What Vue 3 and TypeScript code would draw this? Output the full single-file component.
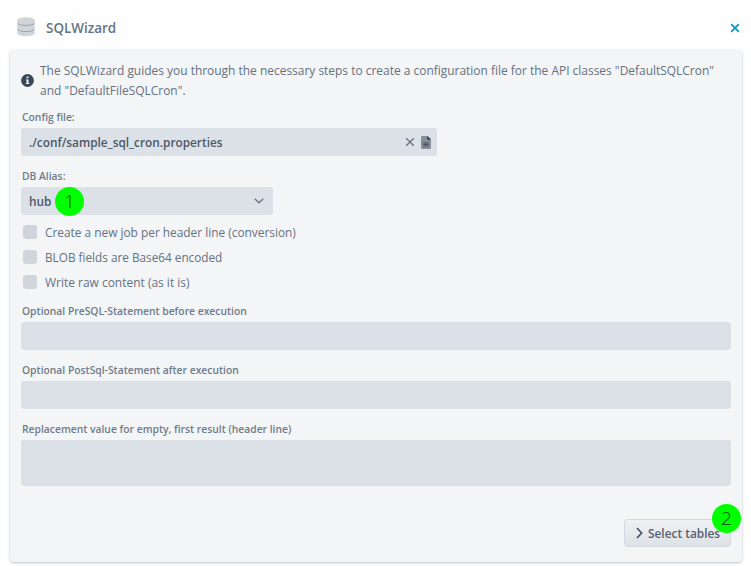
<script setup lang="ts">
import { ref } from 'vue'

interface Option {
  label: string
  cls: string
  checked: boolean
}

const configFile = ref('./conf/sample_sql_cron.properties')
const alias = ref('hub')
const options = ref<Option[]>([
  { label: 'Create a new job per header line (conversion)', cls: 'opt-job', checked: false },
  { label: 'BLOB fields are Base64 encoded', cls: 'opt-blob', checked: false },
  { label: 'Write raw content (as it is)', cls: 'opt-raw', checked: false },
])
const statements = [
  { label: 'Optional PreSQL-Statement before execution', cls: 'pre' },
  { label: 'Optional PostSql-Statement after execution', cls: 'post' },
  { label: 'Replacement value for empty, first result (header line)', cls: 'replacement' },
]
</script>

<template>
  <div class="dialog">
    <header class="header">
      <svg class="db-icon" width="18" height="20" viewBox="0 0 18 20">
        <path d="M.3 3.5C.3-.7 17.7-.7 17.7 3.5V16C17.7 20.2.3 20.2.3 16Z" fill="#d0d5da" />
        <path d="M.5 6C2 9.2 16 9.2 17.5 6M.5 12.2C2 15.4 16 15.4 17.5 12.2" fill="none" stroke="#98a3ae" stroke-width="1" />
      </svg>
      <h1 class="title"><span class="narrow">SQLWizard</span></h1>
      <svg class="close" width="10" height="10" viewBox="0 0 10 10">
        <path d="M1.2 1.2 8.8 8.8M8.8 1.2 1.2 8.8" fill="none" stroke="#139ac4" stroke-width="1.9" />
      </svg>
    </header>

    <main class="card">
      <div class="intro">
        <svg class="info" width="13" height="13" viewBox="0 0 13 13">
          <circle cx="6.5" cy="6.5" r="6.4" fill="#394858" />
          <path d="M5.6 2.5h1.9v1.8H5.6zM5 5.4h2.5v3.5h.8V10H4.8V8.9h.8V6.5H5z" fill="#f3f5f7" />
        </svg>
        <p class="intro-text narrow">
          The SQLWizard guides you through the necessary steps to create a configuration file for the API classes "DefaultSQLCron"<br>
          and "DefaultFileSQLCron".
        </p>
      </div>

      <div class="label config-label"><span class="narrow">Config file:</span></div>
      <div class="field config">
        <span class="value narrow">{{ configFile }}</span>
        <svg class="clear" width="10" height="10" viewBox="0 0 10 10">
          <path d="M1.2 1.2 8.8 8.8M8.8 1.2 1.2 8.8" fill="none" stroke="#66717f" stroke-width="1.3" />
        </svg>
        <svg class="file" width="10" height="13" viewBox="0 0 10 13">
          <path d="M1.3 0H6.4L10 3.6V11.8Q10 13 8.8 13H1.2Q0 13 0 11.8V1.2Q0 0 1.3 0Z" fill="#858e9a" />
          <path d="M6.4 0 10 3.6H6.4Z" fill="#29323e" />
          <path d="M2.3 7h5.4M2.3 8.5h5.4M2.3 10h5.4" stroke="#46515f" stroke-width="1.1" />
        </svg>
      </div>

      <div class="label alias-label"><span class="narrow">DB Alias:</span></div>
      <div class="field select">
        <span class="value narrow">{{ alias }}</span>
        <svg width="10" height="6" viewBox="0 0 10 6">
          <path d="M.7.7 5 4.8 9.3.7" fill="none" stroke="#687583" stroke-width="1.3" />
        </svg>
        <span class="badge badge-one">1</span>
      </div>

      <div class="options">
        <div v-for="o in options" :key="o.label" class="option" @click="o.checked = !o.checked">
          <span class="box"></span>
          <span class="option-text narrow" :class="o.cls">{{ o.label }}</span>
        </div>
      </div>

      <div v-for="s in statements" :key="s.cls" class="statement" :class="s.cls">
        <div class="label"><span class="narrow">{{ s.label }}</span></div>
        <div class="field input"></div>
      </div>

      <footer class="actions">
        <div class="button">
          <svg width="7" height="12" viewBox="0 0 7 12">
            <path d="M1 1 5.7 6 1 11" fill="none" stroke="#414d5b" stroke-width="1.6" />
          </svg>
          <span class="narrow">Select tables</span>
          <span class="badge badge-two">2</span>
        </div>
      </footer>
    </main>
  </div>
</template>

<style>
body {
  margin: 0;
  background: #fefefe;
}
</style>

<style scoped>
.dialog {
  box-sizing: border-box;
  width: 751px;
  height: 566px;
  padding: 0 9px 4px 10px;
  overflow: hidden;
  background: #fefefe;
  color: #66717f;
  font-family: "Open Sans", "Noto Sans", sans-serif;
  white-space: nowrap;
}
.narrow {
  display: inline-block;
  transform: scaleX(0.913);
  transform-origin: left center;
}
svg {
  flex: none;
}
.header {
  display: flex;
  align-items: center;
  box-sizing: border-box;
  height: 50px;
  padding: 5px 2px 0 7px;
}
.title {
  flex: 1;
  margin: 0 0 0 11px;
  font-size: 14px;
  font-weight: 600;
  line-height: 20px;
  color: #667383;
}
.title .narrow {
  transform: scaleX(0.96);
}
.card {
  box-sizing: border-box;
  height: 512px;
  padding: 10px 11px 0;
  background: #f3f5f7;
  border-radius: 4px;
  box-shadow: 0 1px 3px rgba(30, 45, 60, 0.28);
}
.db-icon {
  margin-top: -1px;
}
.intro {
  display: flex;
  align-items: center;
  height: 40px;
}
.intro-text {
  margin: 0 0 0 6px;
  font-size: 13px;
  line-height: 20px;
  transform: scaleX(0.919);
}
.label {
  height: 16px;
  line-height: 16px;
  padding-left: 1px;
  font-size: 11px;
  font-weight: 600;
  color: #707b89;
}
.label .narrow {
  transform: scaleX(0.938);
}
.config-label {
  margin-top: 9px;
}
.alias-label {
  margin-top: 12px;
}
.field {
  display: flex;
  align-items: center;
  box-sizing: border-box;
  height: 28px;
  background: #dce1e8;
  border-radius: 3px;
}
.config {
  width: 416px;
  margin-top: 3px;
  padding: 0 6px 0 8px;
}
.value {
  margin-right: auto;
  font-size: 13px;
  font-weight: 600;
  line-height: 20px;
  color: #4c5866;
  transform: scaleX(0.909);
}
.file {
  margin-left: 6px;
}
.select {
  position: relative;
  width: 252px;
  margin-top: 3px;
  padding: 0 9px 0 8px;
}
.badge {
  position: absolute;
  width: 29px;
  height: 29px;
  border-radius: 50%;
  background: #00ff00;
  color: #075d12;
  font-family: "Noto Sans", sans-serif;
  font-size: 19px;
  font-weight: 300;
  line-height: 28px;
  text-align: center;
}
.badge-one {
  left: 34px;
  top: 0;
}
.badge-two {
  right: -11px;
  top: -16px;
}
.options {
  padding: 4px 0 0 2px;
}
.option {
  display: flex;
  align-items: center;
  height: 25px;
}
.box {
  width: 14px;
  height: 14px;
  margin-right: 8px;
  border-radius: 3px;
  background: #d0d5dc;
}
.option-text {
  font-size: 13px;
  line-height: 20px;
}
.opt-blob {
  transform: scaleX(0.905);
}
.opt-raw {
  transform: scaleX(0.92);
}
.statement {
  margin-bottom: 12px;
}
.statement.pre {
  margin-top: 9px;
}
.input {
  margin-top: 3px;
}
.replacement .input {
  height: 46px;
}
.actions {
  display: flex;
  justify-content: flex-end;
  margin-top: 33px;
}
.button {
  position: relative;
  display: flex;
  align-items: center;
  gap: 5px;
  box-sizing: border-box;
  width: 107px;
  height: 28px;
  padding-left: 11px;
  border: 1px solid #d3d9e1;
  border-radius: 4px;
  background: linear-gradient(#eff1f4, #dde2e8);
  font-size: 13px;
  font-weight: 600;
  color: #566170;
}
</style>
